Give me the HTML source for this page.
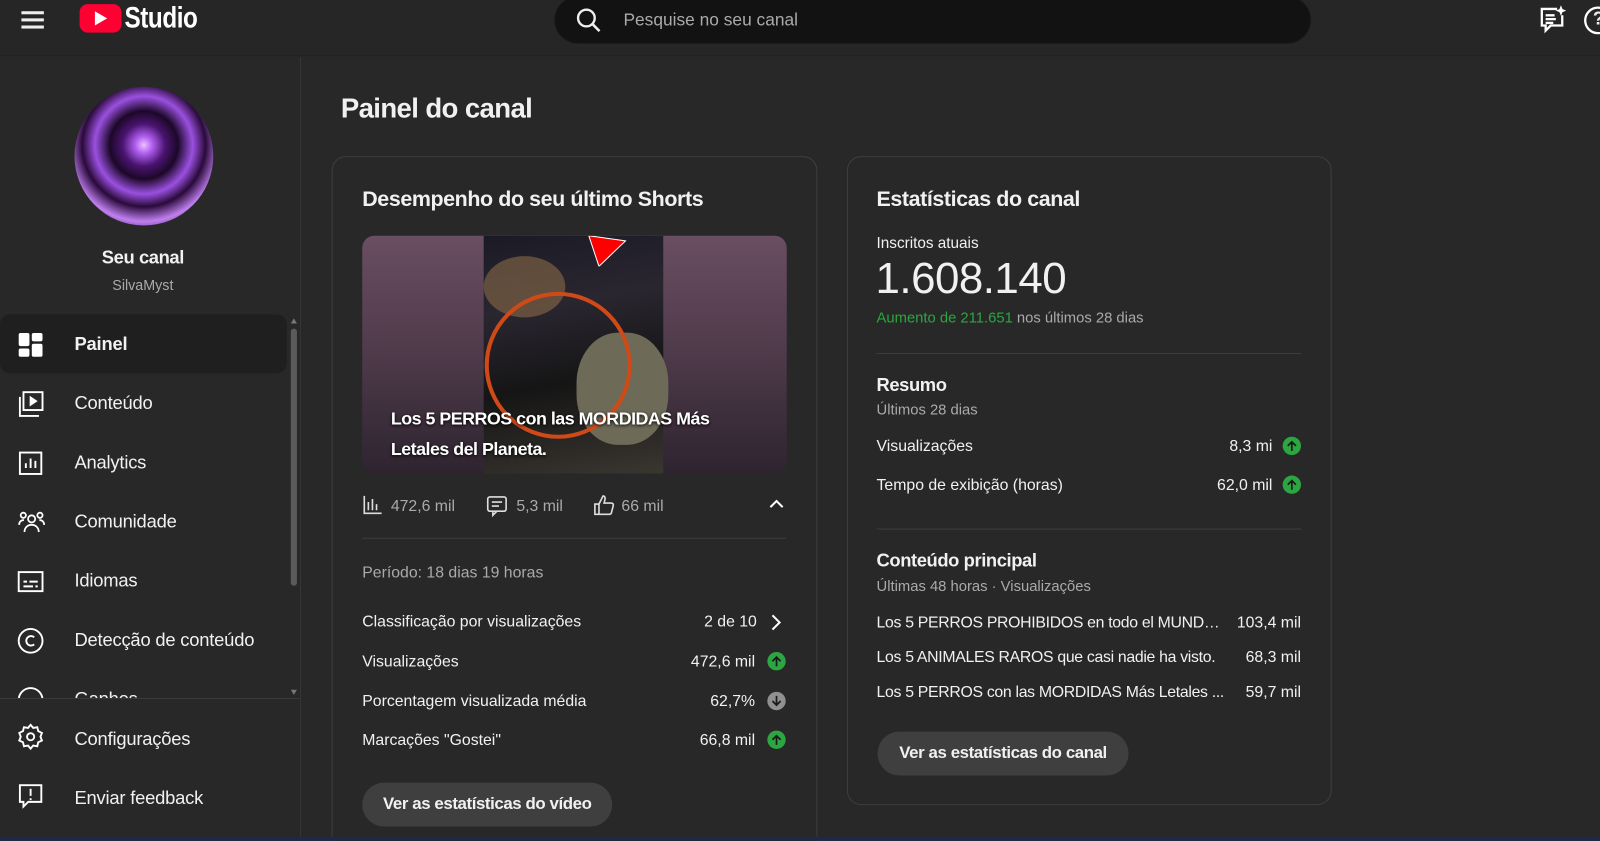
<!DOCTYPE html>
<html><head><meta charset="utf-8"><style>
*{box-sizing:border-box;margin:0;padding:0}
html,body{width:1600px;height:841px;overflow:hidden;background:#1e2a45}
#w{position:absolute;left:0;top:0;width:1568px;height:824px;transform:scale(1.0204);transform-origin:0 0;background:#282828;font-family:"Liberation Sans",Arial,sans-serif;color:#f1f1f1;overflow:hidden}
.a{position:absolute;white-space:nowrap}
.hdr{position:absolute;left:0;top:0;width:1568px;height:55px;background:#262626;border-bottom:1px solid #222}
.card{position:absolute;border:1px solid #3e3e3e;border-radius:14px;background:#282828}
.nav{position:absolute;left:0;top:308px;width:283px;height:376px;overflow:hidden}
.ni{position:absolute;left:0;width:281px;height:58px}
.ni span{position:absolute;left:73px;top:19px;font-size:18px;color:#f1f1f1;letter-spacing:-.2px}
.ni svg{position:absolute;left:16px;top:16px}
.row{position:absolute;font-size:15.5px;color:#f1f1f1;top:0}
.g{color:#aaa}
.btn{position:absolute;background:#3f3f3f;border-radius:22px;font-size:16.5px;font-weight:bold;color:#f1f1f1;text-align:center;letter-spacing:-.4px}
.dot{position:absolute;width:18px;height:18px;border-radius:50%;background:#2ba640}
.dot svg{position:absolute;left:3px;top:3px}
.t{letter-spacing:-.4px}
</style></head><body><div id="w">
<div class="hdr"></div>
<div class="a" style="left:21px;top:11px;width:22px;height:3px;background:#eee;box-shadow:0 7px 0 #eee,0 14px 0 #eee"></div>
<div class="a" style="left:78px;top:4px;width:41px;height:28px;background:#ff0033;border-radius:8px"></div>
<div class="a" style="left:93px;top:11px;width:0;height:0;border-left:12px solid #fff;border-top:7px solid transparent;border-bottom:7px solid transparent"></div>
<div class="a" style="left:122px;top:2px;font-size:29px;font-weight:bold;color:#fff;letter-spacing:-.5px;transform:scaleX(.82);transform-origin:0 0">Studio</div>
<div class="a" style="left:543px;top:-4px;width:742px;height:47px;background:#121212;border-radius:24px;border:1px solid #1c1c1c"></div>
<svg class="a" style="left:563px;top:6px" width="28" height="28" viewBox="0 0 24 24"><circle cx="10" cy="10" r="7" fill="none" stroke="#eee" stroke-width="2"/><path d="M15 15l6 6" stroke="#eee" stroke-width="2.2"/></svg>
<div class="a" style="left:611px;top:10px;font-size:17px;color:#aaa">Pesquise no seu canal</div>
<svg class="a" style="left:1506px;top:5px" width="30" height="30" viewBox="0 0 24 24" fill="none" stroke="#fff" stroke-width="1.8"><path d="M16 3H4v13h3v4l4-4h9V8"/><path d="M7 8h7M7 11h8M7 14h6"/><path d="M19 1.5l.8 2 2 .8-2 .8-.8 2-.8-2-2-.8 2-.8z" fill="#fff" stroke-width="1"/></svg>
<svg class="a" style="left:1551px;top:5px" width="30" height="30" viewBox="0 0 24 24" fill="none" stroke="#fff" stroke-width="1.8"><circle cx="12" cy="12" r="10"/></svg>
<div class="a" style="left:1561px;top:8px;font-size:18px;font-weight:bold">?</div>

<div class="a" style="left:294px;top:56px;width:1px;height:768px;background:#353535"></div>
<div class="a" style="left:73px;top:85px;width:136px;height:136px;border-radius:50%;background:radial-gradient(circle at 50% 42%,#f0c0ff 0,#b060f0 8%,#4a1470 20%,#1c0828 32%,#9a50e0 46%,#2a0a3a 58%,#c080f0 72%,#4a1a66 86%,#24082e 100%)"></div>
<div class="a t" style="left:80px;top:242px;width:120px;text-align:center;font-size:18px;font-weight:bold">Seu canal</div>
<div class="a" style="left:80px;top:271px;width:120px;text-align:center;font-size:14px;color:#aaa">SilvaMyst</div>

<div class="nav">
 <div class="ni" style="top:0;background:#1f1f1f;border-radius:10px"></div>
 <div class="ni" style="top:0"><svg width="28" height="28" viewBox="0 0 24 24" fill="#fff"><rect x="2" y="2" width="9" height="11" rx="1.5"/><rect x="13" y="2" width="9" height="7" rx="1.5"/><rect x="2" y="15" width="9" height="7" rx="1.5"/><rect x="13" y="11" width="9" height="11" rx="1.5"/></svg><span style="font-weight:bold">Painel</span></div>
 <div class="ni" style="top:58px"><svg width="28" height="28" viewBox="0 0 24 24" fill="none" stroke="#fff" stroke-width="1.6"><rect x="6" y="2" width="16" height="15"/><path d="M3 6v16h16"/><path d="M12 6.5v6l4.5-3z" fill="#fff"/></svg><span>Conteúdo</span></div>
 <div class="ni" style="top:116px"><svg width="28" height="28" viewBox="0 0 24 24" fill="none" stroke="#fff" stroke-width="1.6"><rect x="3" y="3" width="18" height="18"/><path d="M8 16v-4M12 16V8M16 16v-6"/></svg><span>Analytics</span></div>
 <div class="ni" style="top:174px"><svg width="30" height="28" viewBox="0 0 24 24" fill="none" stroke="#fff" stroke-width="1.5"><circle cx="12" cy="9" r="3"/><path d="M6 20c0-4 3-6 6-6s6 2 6 6"/><circle cx="5" cy="6" r="2.2"/><circle cx="19" cy="6" r="2.2"/><path d="M1.5 14c0-2.5 1.5-4 4-4M22.5 14c0-2.5-1.5-4-4-4"/></svg><span>Comunidade</span></div>
 <div class="ni" style="top:232px"><svg width="28" height="28" viewBox="0 0 24 24" fill="none" stroke="#fff" stroke-width="1.6"><rect x="2" y="4" width="20" height="16"/><path d="M6 12h3M11 12h7M6 16h8M16 16h2"/></svg><span>Idiomas</span></div>
 <div class="ni" style="top:290px"><svg width="28" height="28" viewBox="0 0 24 24" fill="none" stroke="#fff" stroke-width="1.6"><circle cx="12" cy="12" r="10"/><path d="M15 9a4 4 0 1 0 0 6"/></svg><span>Detecção de conteúdo</span></div>
 <div class="ni" style="top:348px"><svg width="28" height="28" viewBox="0 0 24 24" fill="none" stroke="#fff" stroke-width="1.6"><circle cx="12" cy="12" r="10"/></svg><span>Ganhos</span></div>
</div>
<div class="a" style="left:285px;top:322px;width:6px;height:252px;background:#5a5a5a;border-radius:3px"></div>
<div class="a" style="left:285px;top:312px;border-left:3px solid transparent;border-right:3px solid transparent;border-bottom:5px solid #777"></div>
<div class="a" style="left:285px;top:676px;border-left:3px solid transparent;border-right:3px solid transparent;border-top:5px solid #777"></div>
<div class="a" style="left:0;top:684px;width:294px;height:1px;background:#3a3a3a"></div>
<svg class="a" style="left:16px;top:708px" width="28" height="28" viewBox="0 0 24 24" fill="none" stroke="#fff" stroke-width="1.6"><circle cx="12" cy="12" r="3"/><path d="M12 2l2.2 2.6 3.4-.6.8 3.3 3.1 1.5-1.2 3.2 1.2 3.2-3.1 1.5-.8 3.3-3.4-.6L12 22l-2.2-2.6-3.4.6-.8-3.3-3.1-1.5 1.2-3.2-1.2-3.2 3.1-1.5.8-3.3 3.4.6z"/></svg>
<div class="a" style="left:73px;top:714px;font-size:18px;letter-spacing:-.2px">Configurações</div>
<svg class="a" style="left:16px;top:766px" width="28" height="28" viewBox="0 0 24 24" fill="none" stroke="#fff" stroke-width="1.6"><path d="M3 3h18v14H10l-4 4v-4H3z"/><path d="M12 6v6M12 14v1.5"/></svg>
<div class="a" style="left:73px;top:772px;font-size:18px;letter-spacing:-.2px">Enviar feedback</div>

<div class="a t" style="left:334px;top:91px;font-size:27px;font-weight:bold;letter-spacing:-.6px">Painel do canal</div>

<div class="card" style="left:325px;top:153px;width:476px;height:700px"></div>
<div class="a t" style="left:355px;top:184px;font-size:21px;font-weight:bold">Desempenho do seu último Shorts</div>
<div class="a" style="left:355px;top:231px;width:416px;height:233px;border-radius:12px;overflow:hidden;background:linear-gradient(180deg,#6a4e62 0%,#4e3a4a 50%,#2e2430 100%)">
 <div class="a" style="left:119px;top:0;width:176px;height:233px;background:linear-gradient(170deg,#1a1a26 0%,#2a2630 30%,#151515 60%,#3a3630 100%)"></div>
 <div class="a" style="left:119px;top:20px;width:80px;height:60px;border-radius:50%;background:#8a6a48;opacity:.6"></div>
 <div class="a" style="left:210px;top:95px;width:90px;height:110px;border-radius:45%;background:#6e6a58"></div>
 <div class="a" style="left:120px;top:55px;width:144px;height:144px;border-radius:50%;border:4px solid #d04a18"></div>
 <svg class="a" style="left:220px;top:0" width="40" height="30"><path d="M2 0L38 5L12 30z" fill="#f00" stroke="#fff" stroke-width="1"/></svg>
 <div class="a" style="left:28px;top:164px;font-size:17.5px;font-weight:bold;line-height:30px;color:#fff;letter-spacing:-.5px;text-shadow:0 1px 3px #000">Los 5 PERROS con las MORDIDAS Más<br>Letales del Planeta.</div>
</div>
<svg class="a" style="left:355px;top:485px" width="20" height="20" viewBox="0 0 20 20" fill="none" stroke="#ddd" stroke-width="1.6"><path d="M2 1v17h17M6 15V7M10 15V4M14 15V9"/></svg>
<div class="a g" style="left:383px;top:488px;font-size:15.5px">472,6 mil</div>
<svg class="a" style="left:476px;top:485px" width="22" height="22" viewBox="0 0 22 22" fill="none" stroke="#ddd" stroke-width="1.6"><rect x="2" y="2" width="18" height="14" rx="2"/><path d="M7 16v4l4-4M6 7h10M6 11h7"/></svg>
<div class="a g" style="left:506px;top:488px;font-size:15.5px">5,3 mil</div>
<svg class="a" style="left:581px;top:484px" width="21" height="22" viewBox="0 0 21 22" fill="none" stroke="#ddd" stroke-width="1.6"><path d="M2 10h4v10H2zM6 10l4-8c2 0 2 2 2 3l-1 4h7c1.5 0 2.3 1 2 2.5l-1.8 7c-.3 1-1 1.5-2 1.5H6"/></svg>
<div class="a g" style="left:609px;top:488px;font-size:15.5px">66 mil</div>
<svg class="a" style="left:753px;top:488px" width="16" height="12" viewBox="0 0 16 12" fill="none" stroke="#fff" stroke-width="2"><path d="M2 9l6-6 6 6"/></svg>
<div class="a" style="left:355px;top:527px;width:415px;height:1px;background:#3e3e3e"></div>
<div class="a g" style="left:355px;top:553px;font-size:15.5px">Período: 18 dias 19 horas</div>
<div class="a" style="left:355px;top:601px;width:415px">
<div class="row" style="left:0">Classificação por visualizações</div>
<div class="row" style="left:335px">2 de 10</div></div>
<svg class="a" style="left:754px;top:601px" width="12" height="18" viewBox="0 0 12 18" fill="none" stroke="#fff" stroke-width="2"><path d="M3 2l7 7-7 7"/></svg>
<div class="a" style="left:355px;top:640px"><div class="row" style="left:0">Visualizações</div><div class="row" style="left:245px;width:140px;text-align:right">472,6 mil</div></div>
<div class="dot" style="left:752px;top:639px"><svg width="12" height="12" viewBox="0 0 12 12" fill="none" stroke="#1a1a1a" stroke-width="1.7"><path d="M6 11V2M2 6l4-4 4 4"/></svg></div>
<div class="a" style="left:355px;top:679px"><div class="row" style="left:0">Porcentagem visualizada média</div><div class="row" style="left:245px;width:140px;text-align:right">62,7%</div></div>
<div class="dot" style="left:752px;top:678px;background:#909090"><svg width="12" height="12" viewBox="0 0 12 12" fill="none" stroke="#1a1a1a" stroke-width="1.7"><path d="M6 1v9M2 6l4 4 4-4"/></svg></div>
<div class="a" style="left:355px;top:717px"><div class="row" style="left:0">Marcações "Gostei"</div><div class="row" style="left:245px;width:140px;text-align:right">66,8 mil</div></div>
<div class="dot" style="left:752px;top:716px"><svg width="12" height="12" viewBox="0 0 12 12" fill="none" stroke="#1a1a1a" stroke-width="1.7"><path d="M6 11V2M2 6l4-4 4 4"/></svg></div>
<div class="btn" style="left:355px;top:767px;width:245px;height:43px;line-height:43px">Ver as estatísticas do vídeo</div>

<div class="card" style="left:830px;top:153px;width:475px;height:636px"></div>
<div class="a t" style="left:859px;top:184px;font-size:21px;font-weight:bold">Estatísticas do canal</div>
<div class="a" style="left:859px;top:230px;font-size:15px">Inscritos atuais</div>
<div class="a" style="left:858px;top:249px;font-size:43px;letter-spacing:-.5px">1.608.140</div>
<div class="a" style="left:859px;top:304px;font-size:14.5px;color:#aaa"><span style="color:#2ba640">Aumento de 211.651</span> nos últimos 28 dias</div>
<div class="a" style="left:859px;top:346px;width:416px;height:1px;background:#3e3e3e"></div>
<div class="a t" style="left:859px;top:367px;font-size:18px;font-weight:bold">Resumo</div>
<div class="a g" style="left:859px;top:394px;font-size:14.5px">Últimos 28 dias</div>
<div class="a" style="left:859px;top:429px"><div class="row" style="left:0">Visualizações</div><div class="row" style="left:241px;width:147px;text-align:right">8,3 mi</div></div>
<div class="dot" style="left:1257px;top:428px"><svg width="12" height="12" viewBox="0 0 12 12" fill="none" stroke="#1a1a1a" stroke-width="1.7"><path d="M6 11V2M2 6l4-4 4 4"/></svg></div>
<div class="a" style="left:859px;top:467px"><div class="row" style="left:0">Tempo de exibição (horas)</div><div class="row" style="left:241px;width:147px;text-align:right">62,0 mil</div></div>
<div class="dot" style="left:1257px;top:466px"><svg width="12" height="12" viewBox="0 0 12 12" fill="none" stroke="#1a1a1a" stroke-width="1.7"><path d="M6 11V2M2 6l4-4 4 4"/></svg></div>
<div class="a" style="left:859px;top:518px;width:416px;height:1px;background:#3e3e3e"></div>
<div class="a t" style="left:859px;top:539px;font-size:18px;font-weight:bold">Conteúdo principal</div>
<div class="a g" style="left:859px;top:567px;font-size:14.5px">Últimas 48 horas · Visualizações</div>
<div class="a" style="left:859px;top:602px;width:416px;height:20px"><div class="row" style="left:0;width:340px;overflow:hidden;text-overflow:ellipsis;letter-spacing:-.3px">Los 5 PERROS PROHIBIDOS en todo el MUNDO ...</div><div class="row" style="left:341px;width:75px;text-align:right">103,4 mil</div></div>
<div class="a" style="left:859px;top:636px;width:416px;height:20px"><div class="row" style="left:0;width:340px;overflow:hidden;letter-spacing:-.3px">Los 5 ANIMALES RAROS que casi nadie ha visto.</div><div class="row" style="left:341px;width:75px;text-align:right">68,3 mil</div></div>
<div class="a" style="left:859px;top:670px;width:416px;height:20px"><div class="row" style="left:0;width:340px;overflow:hidden;letter-spacing:-.3px">Los 5 PERROS con las MORDIDAS Más Letales ...</div><div class="row" style="left:341px;width:75px;text-align:right">59,7 mil</div></div>
<div class="btn" style="left:860px;top:717px;width:246px;height:43px;line-height:43px">Ver as estatísticas do canal</div>

<div class="a" style="left:0;top:820px;width:1568px;height:4px;background:#1e2a45"></div>
</div></body></html>
